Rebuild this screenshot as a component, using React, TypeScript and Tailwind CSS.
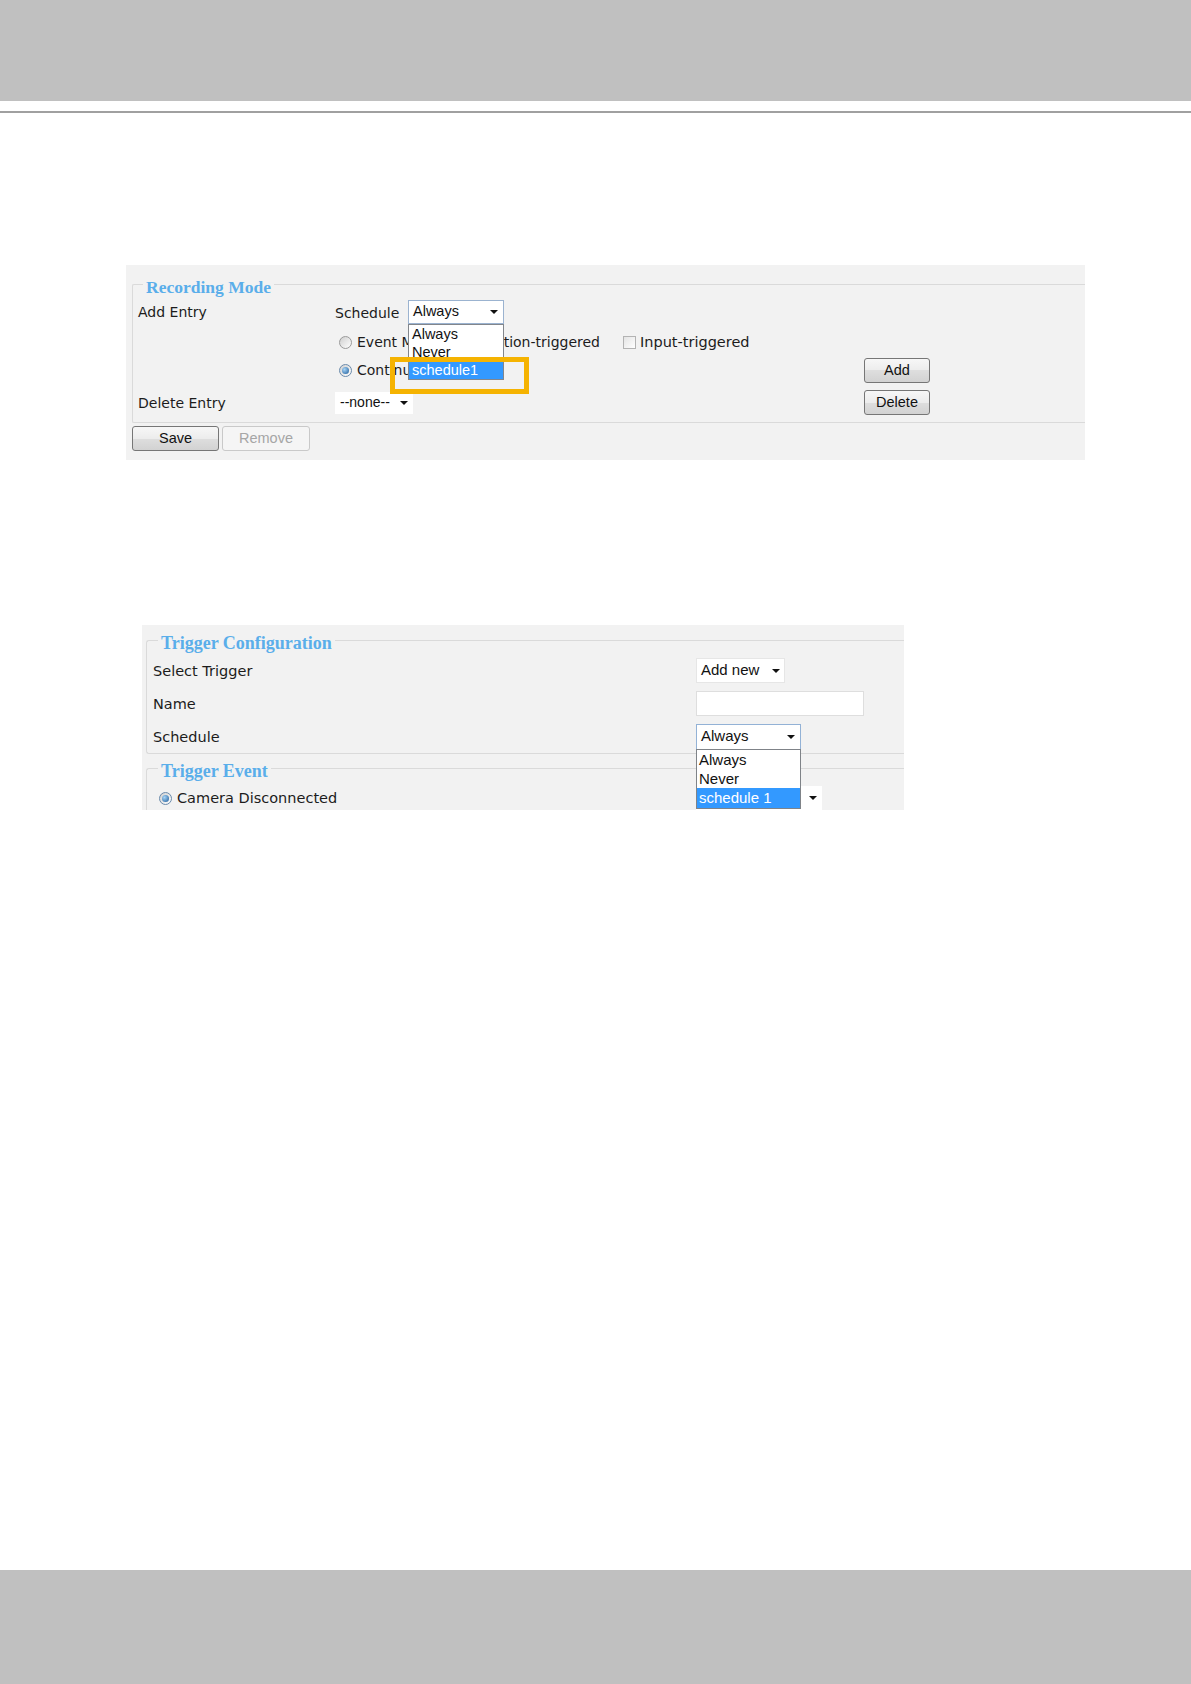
import React from "react";

const label = "font-['DejaVu_Sans',Verdana,sans-serif] text-[#1c1c1c]";
const arial = "font-['Liberation_Sans',Arial,sans-serif] text-[#111]";
const legend =
  "ml-[10px] px-[3px] pt-[6px] font-['Liberation_Serif',serif] font-bold leading-[20px] text-[#5aaeea]";

function Arrow() {
  return (
    <svg width="8" height="4" viewBox="0 0 8 4" className="shrink-0">
      <path d="M0 0h8L4 4z" fill="#111" />
    </svg>
  );
}

function Select({
  value,
  className,
  children,
}: {
  value?: string;
  className: string;
  children?: React.ReactNode;
}) {
  return (
    <div className={`relative flex shrink-0 items-center justify-between bg-white ${arial} ${className}`}>
      <span className="whitespace-nowrap">{value}</span>
      <Arrow />
      {children}
    </div>
  );
}

function Radio({ checked }: { checked?: boolean }) {
  return (
    <span
      className={`flex h-[13px] w-[13px] shrink-0 items-center justify-center rounded-full border bg-[linear-gradient(135deg,#cfcfcf,#ffffff)] ${
        checked ? "border-[#6a8aab]" : "border-[#9a9a9a]"
      }`}
    >
      {checked && (
        <span className="h-[7px] w-[7px] rounded-full bg-[radial-gradient(circle_at_35%_35%,#a6d4f7,#1b5a98)]" />
      )}
    </span>
  );
}

function Button({ children, disabled, className }: { children: React.ReactNode; disabled?: boolean; className: string }) {
  return (
    <div
      className={`flex shrink-0 items-center justify-center rounded-[3px] border ${arial} text-[14.5px] ${
        disabled
          ? "border-[#c9c9c9] bg-[#f5f5f5] !text-[#a6a6a6]"
          : "border-[#767676] bg-[linear-gradient(#f7f7f7,#ececec_50%,#dedede_50%,#d2d2d2)]"
      } ${className}`}
    >
      {children}
    </div>
  );
}

function RecordingMode() {
  return (
    <section className="relative ml-[126px] mt-[152px] h-[195px] w-[959px] bg-[#f2f2f2] pl-[6px] pt-[6px]">
      <fieldset className="rounded-l-[2px] border-t border-b border-l border-[#dadada]">
        <legend className={`${legend} text-[17.5px]`}>Recording Mode</legend>

        <div className="flex h-[30px] items-center">
          <div className={`${label} w-[202px] pl-[5px] pt-[1px] text-[14px]`}>Add Entry</div>
          <div className="flex items-center">
            <span className={`${label} w-[73px] pt-[2px] text-[14px]`}>Schedule</span>
            <Select value="Always" className="h-[24px] w-[96px] border border-[#9bb3d0] pl-[4px] pr-[5px] text-[14.5px]">
              <div className="absolute left-[-1px] top-[calc(100%+1px)] z-10 w-[96px] border border-[#82868c] bg-white text-[14.5px] leading-[18px]">
                <div className="pl-[3px]">Always</div>
                <div className="pl-[3px]">Never</div>
                <div className="bg-[#3399ff] pl-[3px] text-white">schedule1</div>
              </div>
            </Select>
          </div>
        </div>

        <div className="flex h-[31px] items-center">
          <div className="w-[202px]" />
          <div className={`flex items-center pl-[4px] ${label} text-[14px]`}>
            <Radio />
            <span className="ml-[5px] w-[126px] shrink-0 overflow-hidden whitespace-nowrap">Event Mode:</span>
            <span className="whitespace-nowrap">Motion-triggered</span>
            <span className="ml-[23px] h-[13px] w-[13px] shrink-0 border border-[#b3b3b3] bg-[linear-gradient(135deg,#e4e4e4,#ffffff)]" />
            <span className="ml-[4px] whitespace-nowrap text-[14.5px]">Input-triggered</span>
          </div>
        </div>

        <div className="flex h-[25px] items-center">
          <div className="w-[202px]" />
          <div className={`flex w-[529px] items-center pl-[4px] ${label} text-[14px]`}>
            <Radio checked />
            <span className="ml-[5px]">Continuous</span>
          </div>
          <Button className="h-[25px] w-[66px]">Add</Button>
        </div>

        <div className="flex h-[39px] items-center">
          <div className={`${label} w-[202px] pl-[5px] pt-[1px] text-[14px]`}>Delete Entry</div>
          <div className="w-[529px]">
            <Select value="--none--" className="h-[22px] w-[78px] pl-[5px] pr-[5px] text-[14px]" />
          </div>
          <Button className="h-[25px] w-[66px]">Delete</Button>
        </div>
      </fieldset>

      <div className="mt-[3px] flex gap-[3px]">
        <Button className="h-[25px] w-[87px]">Save</Button>
        <Button disabled className="h-[25px] w-[88px]">
          Remove
        </Button>
      </div>

      {/* highlight annotation */}
      <div className="absolute left-[264px] top-[92px] z-20 h-[37px] w-[139px] border-[5px] border-[#f5b301]" />
    </section>
  );
}

function TriggerConfig() {
  const row = "flex h-[33px] items-center";
  const lab = `${label} w-[549px] pl-[6px] pt-[2px] text-[14.5px]`;
  return (
    <section className="relative ml-[142px] mt-[165px] h-[185px] w-[762px] overflow-hidden bg-[#f2f2f2] pl-[4px] pt-[2px]">
      <fieldset className="rounded-l-[3px] border-t border-b border-l border-[#dadada]">
        <legend className={`${legend} ml-[11px] text-[18px]`}>Trigger Configuration</legend>
        <div className="pt-[1px]">
          <div className={row}>
            <div className={lab}>Select Trigger</div>
            <Select value="Add new" className="h-[25px] w-[89px] border border-[#e6e6e6] pl-[4px] pr-[4px] text-[15px]" />
          </div>
          <div className={row}>
            <div className={lab}>Name</div>
            <div className="h-[25px] w-[168px] border border-[#dedede] bg-white" />
          </div>
          <div className={row}>
            <div className={lab}>Schedule</div>
            <Select value="Always" className="h-[26px] w-[105px] border border-[#93b2d6] pl-[4px] pr-[5px] text-[15px]">
              <div className="absolute left-[-1px] top-full z-10 w-[105px] border border-[#7f8388] bg-white text-[15px] leading-[19px]">
                <div className="pl-[2px]">Always</div>
                <div className="pl-[2px]">Never</div>
                <div className="h-[20px] bg-[#3399ff] pl-[2px] text-white">schedule 1</div>
              </div>
            </Select>
          </div>
        </div>
      </fieldset>

      <fieldset className="mt-[1px] rounded-l-[3px] border-t border-l border-[#dadada]">
        <legend className={`${legend} ml-[11px] text-[18px]`}>Trigger Event</legend>
        <div className="flex h-[34px] items-center">
          <div className={`flex w-[549px] items-center pl-[12px] ${label} text-[14.5px]`}>
            <Radio checked />
            <span className="ml-[5px] pt-[2px]">Camera Disconnected</span>
          </div>
          <Select value="" className="h-[24px] w-[126px] pl-[4px] pr-[5px] text-[15px]" />
        </div>
      </fieldset>
    </section>
  );
}

export default function App() {
  return (
    <div className="flex min-h-[1684px] w-[1191px] flex-col bg-white">
      <div className="h-[101px] bg-[#c0c0c0]" />
      <div className="mt-[10px] h-[2px] bg-[#a0a0a0]" />
      <RecordingMode />
      <TriggerConfig />
      <div className="mt-auto h-[114px] bg-[#c0c0c0]" />
    </div>
  );
}
